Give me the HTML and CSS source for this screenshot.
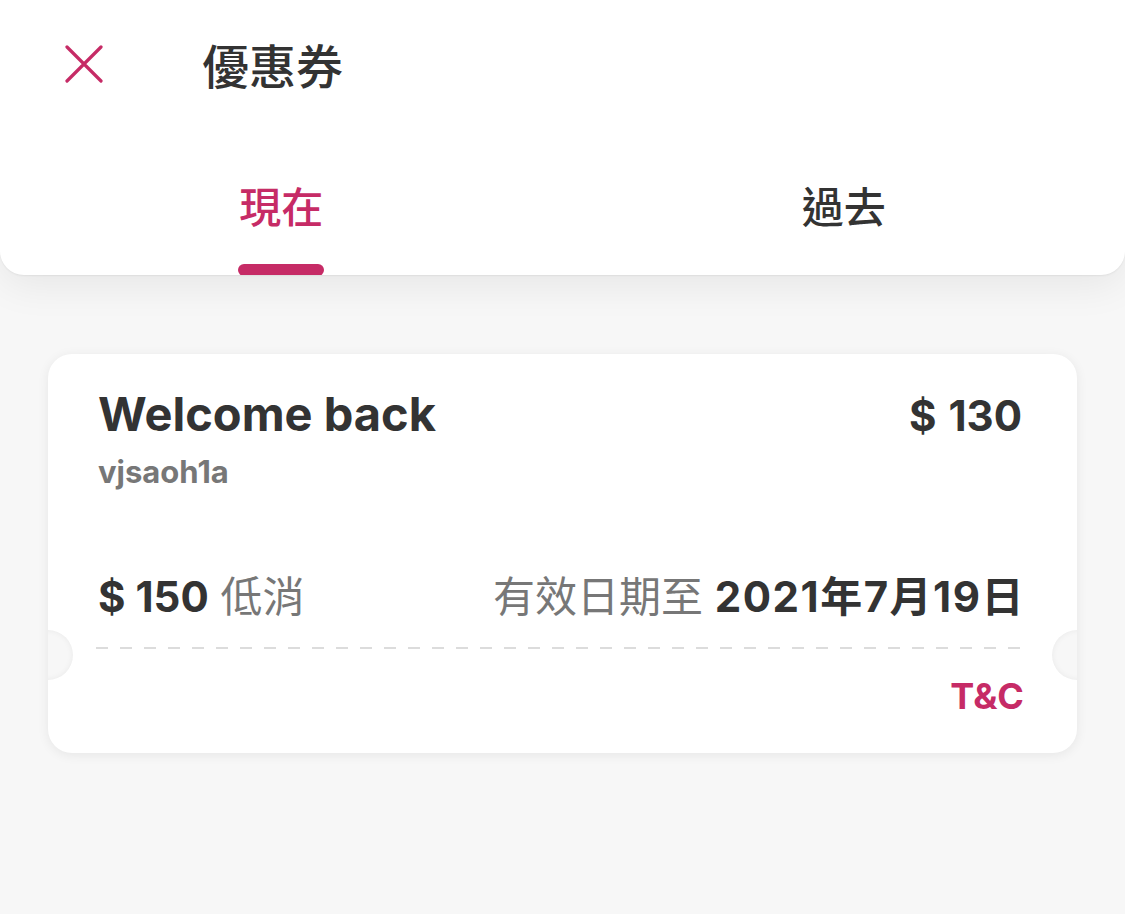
FILE: index.html
```html
<!DOCTYPE html>
<html lang="zh-Hant">
<head>
    <meta charset="UTF-8">
    <meta name="viewport" content="width=device-width, initial-scale=1.0">
    <title>優惠券</title>
    <link rel="stylesheet" href="styles.css">
</head>
<body>
    <header class="header">
        <div class="topbar">
            <button class="close" aria-label="close">
                <svg width="38" height="38" viewBox="0 0 38 38">
                    <path d="M2 2 L36 36 M36 2 L2 36" stroke="#c62b66" stroke-width="3.2" stroke-linecap="round" fill="none"/>
                </svg>
            </button>
            <h1 class="title">優惠券</h1>
        </div>
        <nav class="tabs">
            <div class="tab active">
                <span>現在</span>
                <i class="bar"></i>
            </div>
            <div class="tab">
                <span>過去</span>
            </div>
        </nav>
    </header>

    <main class="list">
        <div class="coupon">
            <div class="coupon-main">
                <div class="row">
                    <h2 class="name">Welcome back</h2>
                    <div class="amount">$ 130</div>
                </div>
                <div class="code">vjsaoh1a</div>
                <div class="row bottom">
                    <div class="min"><b>$ 150</b> 低消</div>
                    <div class="expiry">有效日期至 <b>2021年7月19日</b></div>
                </div>
            </div>
            <div class="divider"></div>
            <div class="coupon-foot">
                <a class="tnc" href="#">T&amp;C</a>
            </div>
        </div>
    </main>
</body>
</html>
```

FILE: styles.css
```css
body {
    margin: 0;
    min-height: 914px;
    background: #f7f7f7;
    font-family: Inter, "Liberation Sans", "Noto Sans CJK TC", sans-serif;
    color: #333;
}
.header {
    position: relative;
    height: 275px;
    background: #fff;
    border-radius: 0 0 24px 24px;
    box-shadow: 0 10px 40px rgba(0, 0, 0, 0.07), 0 1px 2px rgba(0, 0, 0, 0.06);
    overflow: hidden;
}
.topbar {
    height: 130px;
    display: flex;
    align-items: flex-start;
    padding-left: 65px;
}
.close {
    margin-top: 45px;
    padding: 0;
    border: none;
    background: none;
    width: 38px;
    height: 38px;
}
.close svg {
    display: block;
}
.title {
    margin: 31px 0 0 99px;
    font-family: "Noto Sans CJK TC", sans-serif;
    font-size: 47px;
    line-height: 66px;
    font-weight: 500;
    color: #333;
}
.tabs {
    display: flex;
}
.tab {
    flex: 1;
    display: flex;
    flex-direction: column;
    align-items: center;
    padding-top: 50px;
    font-family: "Noto Sans CJK TC", sans-serif;
    font-size: 42px;
    line-height: 50px;
    font-weight: 500;
    color: #333;
}
.tab.active {
    color: #c62b66;
}
.bar {
    display: block;
    width: 86px;
    height: 12px;
    margin-top: 34px;
    border-radius: 6px;
    background: #c62b66;
}
.list {
    padding: 79px 48px 0;
}
.coupon {
    position: relative;
    background: #fff;
    border-radius: 24px;
    box-shadow: 0 2px 12px rgba(0, 0, 0, 0.07);
    overflow: hidden;
}
.coupon::before,
.coupon::after {
    content: "";
    position: absolute;
    top: 276px;
    width: 50px;
    height: 50px;
    border-radius: 50%;
    background: #f7f7f7;
    box-shadow: inset 0 0 6px rgba(0, 0, 0, 0.06);
}
.coupon::before {
    left: -25px;
}
.coupon::after {
    right: -25px;
}
.coupon-main {
    padding: 32px 55px 0 50px;
}
.row {
    display: flex;
    justify-content: space-between;
    align-items: baseline;
}
.name {
    margin: 0;
    font-size: 47px;
    line-height: 56px;
    font-weight: 700;
}
.amount {
    font-size: 42px;
    font-weight: 700;
    word-spacing: 2px;
}
.code {
    margin-top: 12px;
    font-size: 31px;
    line-height: 36px;
    font-weight: 700;
    color: #777;
}
.bottom {
    margin-top: 82px;
    font-size: 42px;
    line-height: 50px;
}
.min,
.expiry {
    color: #777;
    white-space: nowrap;
    flex-shrink: 0;
    font-family: Inter, "Noto Sans CJK TC", sans-serif;
}
.min b,
.expiry b {
    color: #333;
    font-weight: 700;
}
.expiry b {
    letter-spacing: 1.5px;
    margin-right: -3px;
}
.divider {
    margin: 25px 48px 0;
    height: 2px;
    background-image: linear-gradient(to right, #dcdcdc 12px, transparent 12px);
    background-size: 24px 2px;
}
.coupon-foot {
    display: flex;
    justify-content: flex-end;
    padding: 26px 53px 36px;
}
.tnc {
    font-size: 36px;
    line-height: 42px;
    font-weight: 700;
    color: #c62b66;
    text-decoration: none;
}
```
